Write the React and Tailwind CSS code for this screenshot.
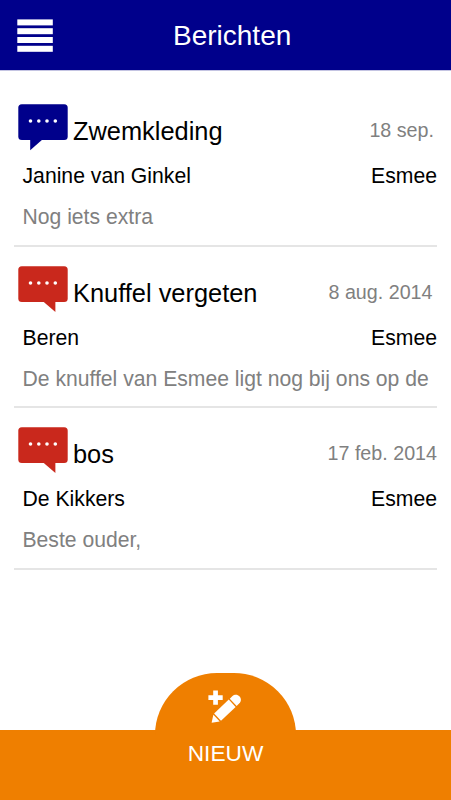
import { useState } from 'react';

const messages = [
  {
    id: 1,
    title: 'Zwemkleding',
    date: '18 sep.',
    sender: 'Janine van Ginkel',
    child: 'Esmee',
    preview: 'Nog iets extra',
    sent: true,
    height: 'h-[162px]',
    dateSpacing: 'pr-[3px]',
  },
  {
    id: 2,
    title: 'Knuffel vergeten',
    date: '8 aug. 2014',
    sender: 'Beren',
    child: 'Esmee',
    preview: 'De knuffel van Esmee ligt nog bij ons op de',
    sent: false,
    height: 'h-[161px]',
    dateSpacing: 'pr-[4.5px]',
  },
  {
    id: 3,
    title: 'bos',
    date: '17 feb. 2014',
    sender: 'De Kikkers',
    child: 'Esmee',
    preview: 'Beste ouder,',
    sent: false,
    height: 'h-[162px]',
    dateSpacing: 'pr-0',
  },
];

//Icons
const MenuIcon = () => (
  <svg width="36" height="34" viewBox="0 0 36 34" fill="white">
    <rect x="0.3" y="0.4" width="35.5" height="6" />
    <rect x="0.3" y="9.2" width="35.5" height="6" />
    <rect x="0.3" y="18" width="35.5" height="6" />
    <rect x="0.3" y="26.8" width="35.5" height="6" />
  </svg>
);

const BubbleIcon = ({ sent }) => (
  <svg width="50" height="47" viewBox="0 0 50 47" className="shrink-0">
    <g fill={sent ? '#00008b' : '#c9281c'}>
      <rect x="0.3" y="0.3" width="49.4" height="35.6" rx="3.5" />
      {sent ? <path d="M12.2 35V46.2L25 35Z" /> : <path d="M37.4 35V46L24.6 35Z" />}
    </g>
    <g fill="white">
      <circle cx="12.5" cy="17" r="1.8" />
      <circle cx="20.8" cy="17" r="1.8" />
      <circle cx="29" cy="17" r="1.8" />
      <circle cx="37.3" cy="17" r="1.8" />
    </g>
  </svg>
);

const NewIcon = () => (
  <svg width="36" height="34" viewBox="0 0 36 34" fill="white">
    <path d="M5.2 0.4H9.9V5.3H14.7V10H9.9V14.8H5.2V10H0.4V5.3H5.2Z" />
    <g transform="translate(3.6 32.8) rotate(-43.5)">
      <path d="M0 0L6.8 -4.6V4.6Z" />
      <rect x="8.2" y="-5" width="20.2" height="10" />
      <path d="M29.8 -5H33.2C40.2 -5 40.2 5 33.2 5H29.8Z" />
    </g>
  </svg>
);

const Message = ({ message }) => (
  <li className={`${message.height} border-b-2 border-[#e5e5e5] pt-[19px]`}>
    {/* Title and date */}
    <div className="flex h-13 items-start pl-1">
      <BubbleIcon sent={message.sent} />
      <h2 className="mt-[13px] ml-[5px] flex-1 text-[25.4px] leading-7">{message.title}</h2>
      <span className={`${message.dateSpacing} mt-3 text-[19.7px] leading-7 text-[#808080]`}>
        {message.date}
      </span>
    </div>
    {/* Sender and child */}
    <div className="mt-1.5 flex justify-between pl-[8.5px] text-[21.2px] leading-7">
      <span>{message.sender}</span>
      <span>{message.child}</span>
    </div>
    {/* Preview */}
    <p className="mt-[13px] overflow-hidden pl-[8.5px] text-[21.15px] leading-7 whitespace-nowrap text-[#808080]">
      {message.preview}
    </p>
  </li>
);

const App = () => {
  const [items] = useState(messages);

  return (
    <div className="flex h-screen flex-col overflow-hidden bg-white font-['Liberation_Sans',Arial,sans-serif] text-black">
      {/* Header */}
      <header className="flex h-[71px] shrink-0 items-center border-b border-[#c4c4e2] bg-[#00008b] pt-px pl-[17px]">
        <button type="button">
          <MenuIcon />
        </button>
        <h1 className="ml-[120px] text-[28px] leading-8 text-white">Berichten</h1>
      </header>

      {/* Messages */}
      <ul className="flex-1 px-3.5 pt-3.5">
        {items.map((message) => (
          <Message key={message.id} message={message} />
        ))}
      </ul>

      {/* New message */}
      <footer className="flex h-[70px] shrink-0 justify-center bg-[#ef7f00]">
        <button
          type="button"
          className="-mt-[57px] flex h-[127px] w-[141px] flex-col items-center rounded-t-[62px] bg-[#ef7f00] pt-[17px] text-white"
        >
          <NewIcon />
          <span className="mt-[15px] text-[22.7px] leading-7">NIEUW</span>
        </button>
      </footer>
    </div>
  );
};

export default App;
